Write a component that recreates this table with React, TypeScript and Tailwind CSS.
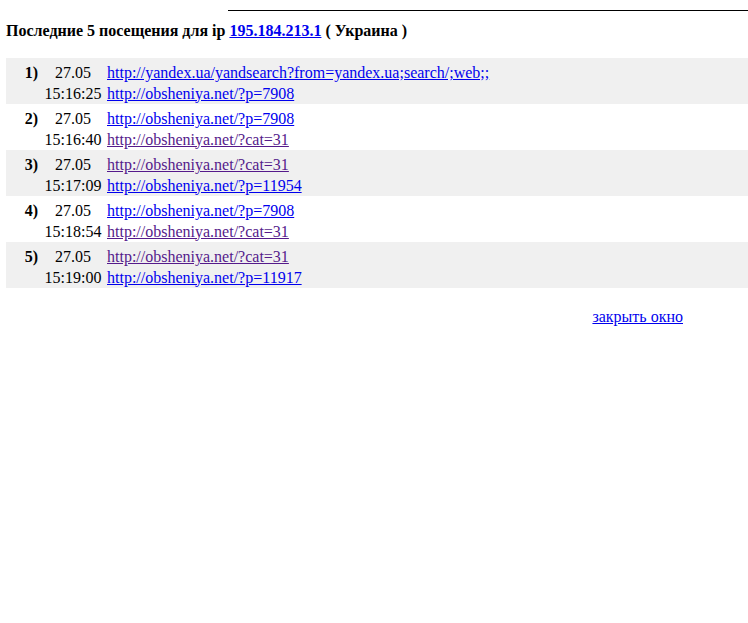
import React from 'react';

type Visit = {
  n: number;
  date: string;
  time: string;
  from: { href: string; visited?: boolean };
  to: { href: string; visited?: boolean };
};

const visits: Visit[] = [
  {
    n: 1,
    date: '27.05',
    time: '15:16:25',
    from: { href: 'http://yandex.ua/yandsearch?from=yandex.ua;search/;web;;' },
    to: { href: 'http://obsheniya.net/?p=7908' },
  },
  {
    n: 2,
    date: '27.05',
    time: '15:16:40',
    from: { href: 'http://obsheniya.net/?p=7908' },
    to: { href: 'http://obsheniya.net/?cat=31', visited: true },
  },
  {
    n: 3,
    date: '27.05',
    time: '15:17:09',
    from: { href: 'http://obsheniya.net/?cat=31', visited: true },
    to: { href: 'http://obsheniya.net/?p=11954' },
  },
  {
    n: 4,
    date: '27.05',
    time: '15:18:54',
    from: { href: 'http://obsheniya.net/?p=7908' },
    to: { href: 'http://obsheniya.net/?cat=31', visited: true },
  },
  {
    n: 5,
    date: '27.05',
    time: '15:19:00',
    from: { href: 'http://obsheniya.net/?cat=31', visited: true },
    to: { href: 'http://obsheniya.net/?p=11917' },
  },
];

const Link: React.FC<{ href: string; visited?: boolean }> = ({ href, visited }) => (
  <a
    href="#"
    className={`underline whitespace-nowrap ${visited ? 'text-[#551a8b]' : 'text-[#0000ee]'}`}
  >
    {href}
  </a>
);

const App: React.FC = () => {
  return (
    <div className="w-[748px] h-[623px] bg-white text-black text-[16px] font-['Liberation_Serif',serif] overflow-hidden">
      <div className="pt-[10px] pl-[228px]">
        <div className="h-px bg-black" />
      </div>

      <div className="mt-[11px] px-[6px] font-bold leading-[18px] whitespace-nowrap">
        Последние 5 посещения для ip{' '}
        <a href="#" className="text-[#0000ee] underline">
          195.184.213.1
        </a>{' '}
        ( Украина )
      </div>

      <div className="mt-[18px] ml-[6px]">
        {visits.map((v, i) => (
          <div
            key={v.n}
            className={`h-[46px] pt-[5px] grid grid-cols-[33px_58px_1fr] gap-x-[5px] leading-[20px] ${
              i % 2 === 0 ? 'bg-[#f0f0f0]' : 'bg-white'
            }`}
          >
            <div className="text-right pr-[1px] font-bold">{v.n})</div>
            <div className="text-center">{v.date}</div>
            <div>
              <Link {...v.from} />
            </div>
            <div />
            <div className="text-center whitespace-nowrap">{v.time}</div>
            <div>
              <Link {...v.to} />
            </div>
          </div>
        ))}
      </div>

      <div className="mt-[20px] flex justify-end pr-[65px] leading-[18px]">
        <a href="#" className="text-[#0000ee] underline">
          закрыть окно
        </a>
      </div>
    </div>
  );
};

export default App;
